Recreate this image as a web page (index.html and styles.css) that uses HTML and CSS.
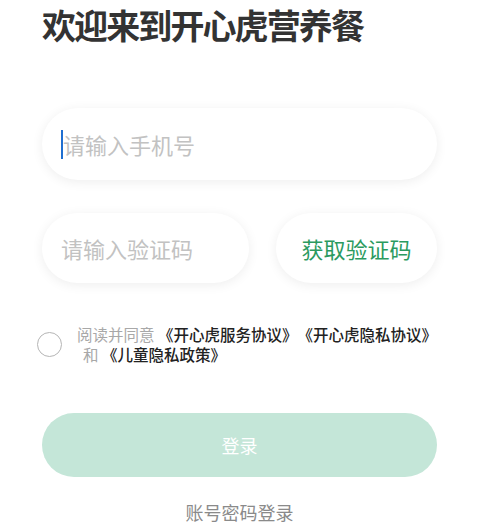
FILE: index.html
```html
<!DOCTYPE html>
<html lang="zh-CN">
<head>
<meta charset="utf-8">
<title>登录</title>
<link rel="stylesheet" href="styles.css">
</head>
<body>
<main class="page">
  <h1 class="title">欢迎来到开心虎营养餐</h1>
  <div class="field field-phone">
    <span class="caret"></span><span class="placeholder">请输入手机号</span>
  </div>
  <div class="code-row">
    <div class="field field-code"><span class="placeholder">请输入验证码</span></div>
    <div class="code-btn">获取验证码</div>
  </div>
  <div class="agree">
    <span class="check"></span>
    <div class="agree-text">
      <div class="line">阅读并同意 <b>《开心虎服务协议》《开心虎隐私协议》</b></div>
      <div class="line line2">和 <b>《儿童隐私政策》</b></div>
    </div>
  </div>
  <div class="login-btn">登录</div>
  <div class="alt-login">账号密码登录</div>
</main>
</body>
</html>
```
FILE: styles.css
```css
html, body {
  margin: 0;
  padding: 0;
  background: #ffffff;
}
body {
  font-family: "Noto Sans CJK SC", "Noto Sans", sans-serif;
  color: #333;
  text-spacing-trim: space-all;
}
.page {
  display: flex;
  flex-direction: column;
  padding: 0 43px 0 42px;
}
.title {
  margin: 0;
  font-size: 34px;
  line-height: 50px;
  font-weight: 700;
  color: #333;
  letter-spacing: -1.9px;
  white-space: nowrap;
}
.field {
  display: flex;
  align-items: center;
  background: #fff;
  border-radius: 40px;
  box-shadow: 0 2px 12px rgba(0, 0, 0, 0.07);
}
.field-phone {
  margin-top: 58px;
  height: 72px;
  padding-left: 19px;
}
.caret {
  width: 2px;
  height: 29px;
  background: #1f6fd1;
}
.placeholder {
  font-size: 22px;
  color: #c2c2c2;
  line-height: 30px;
}
.code-row {
  display: flex;
  margin-top: 33px;
  gap: 27px;
  height: 70px;
}
.field-code {
  width: 207px;
  padding-left: 19px;
  box-sizing: border-box;
}
.code-btn {
  flex: 1;
  display: flex;
  align-items: center;
  justify-content: center;
  border-radius: 40px;
  background: #fff;
  box-shadow: 0 2px 12px rgba(0, 0, 0, 0.07);
  color: #2b9a5f;
  font-size: 22px;
}
.agree {
  display: flex;
  align-items: center;
  margin-top: 41px;
  margin-left: -5px;
  gap: 15px;
}
.check {
  width: 23px;
  height: 23px;
  border: 1px solid #b5b5b5;
  border-radius: 50%;
  flex: none;
}
.agree-text {
  font-size: 15.5px;
  line-height: 20px;
  color: #a8a8a8;
  white-space: nowrap;
}
.agree-text b {
  color: #222;
  font-weight: 500;
}
.line2 {
  padding-left: 6px;
}
.login-btn {
  margin-top: 49px;
  height: 64px;
  border-radius: 32px;
  background: #c4e6d8;
  color: #fff;
  font-size: 18px;
  display: flex;
  align-items: center;
  justify-content: center;
}
.alt-login {
  margin-top: 22px;
  text-align: center;
  font-size: 18px;
  line-height: 26px;
  color: #8a8a8a;
}
```
